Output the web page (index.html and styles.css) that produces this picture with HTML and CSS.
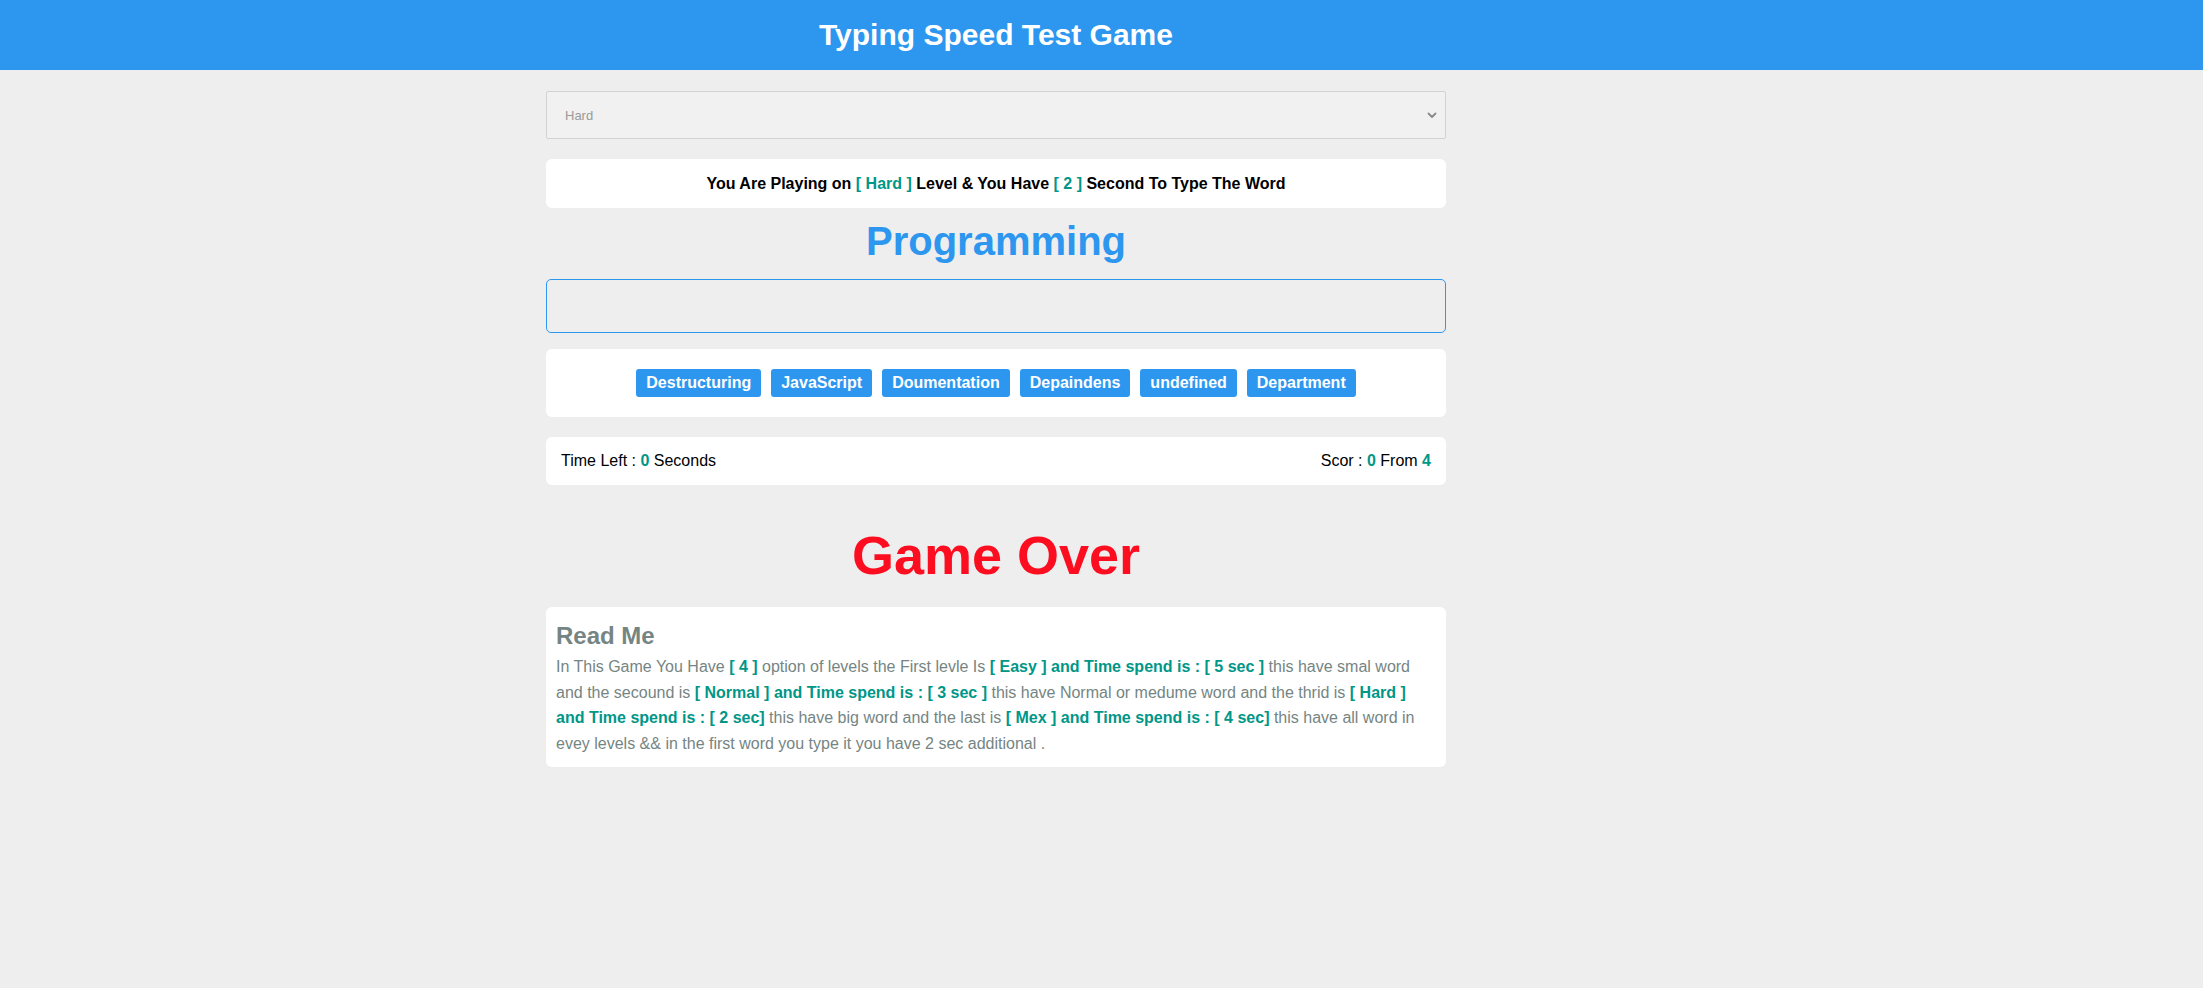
FILE: index.html
```html
<!DOCTYPE html>
<html lang="en">
<head>
<meta charset="utf-8">
<title>Typing Speed Test Game</title>
<link rel="stylesheet" href="styles.css">
</head>
<body>
<header class="top-bar">
  <div class="wrap">
    <h1 class="title">Typing Speed Test Game</h1>
  </div>
</header>
<main class="wrap game">
  <div class="select-box">
    <select class="level-select">
      <option>Hard</option>
    </select>
    <svg class="chev" width="10" height="8" viewBox="0 0 10 8"><path d="M1.5 2.5 L5 6 L8.5 2.5" fill="none" stroke="#8a8a8a" stroke-width="1.8" stroke-linecap="round" stroke-linejoin="round"/></svg>
  </div>
  <div class="card message">You Are Playing on <span class="hl">[ Hard ]</span> Level &amp; You Have <span class="hl">[ 2 ]</span> Second To Type The Word</div>
  <div class="the-word">Programming</div>
  <input class="input" type="text">
  <div class="card upcoming">
    <span class="chip">Destructuring</span>
    <span class="chip">JavaScript</span>
    <span class="chip">Doumentation</span>
    <span class="chip">Depaindens</span>
    <span class="chip">undefined</span>
    <span class="chip">Department</span>
  </div>
  <div class="card control">
    <div>Time Left : <span class="hl">0</span> Seconds</div>
    <div>Scor : <span class="hl">0</span> From <span class="hl">4</span></div>
  </div>
  <div class="finish">Game Over</div>
  <div class="card readme">
    <h2 class="readme-title">Read Me</h2>
    <p class="readme-text">In This Game You Have <b class="hl">[ 4 ]</b> option of levels the First levle Is <b class="hl">[ Easy ] and Time spend is : [ 5 sec ]</b> this have smal word and the secound is <b class="hl">[ Normal ] and Time spend is : [ 3 sec ]</b> this have Normal or medume word and the thrid is <b class="hl">[ Hard ] and Time spend is : [ 2 sec]</b> this have big word and the last is <b class="hl">[ Mex ] and Time spend is : [ 4 sec]</b> this have all word in evey levels &amp;&amp; in the first word you type it you have 2 sec additional .</p>
  </div>
</main>
</body>
</html>
```
FILE: styles.css
```css
* { box-sizing: border-box; }
html, body { margin: 0; padding: 0; }
body {
  background: #eeeeee;
  font-family: "Liberation Sans", Arial, sans-serif;
  color: #000;
  min-height: 988px;
}
.wrap {
  width: 900px;
  margin-left: 546px;
}
.top-bar {
  background: #2d97ef;
  height: 70px;
  display: flex;
  align-items: center;
}
.title {
  margin: 0;
  color: #fff;
  font-size: 30px;
  font-weight: bold;
  text-align: center;
  line-height: 36px;
}
.game {
  display: flex;
  flex-direction: column;
  padding-top: 21px;
}
.select-box { position: relative; }
.level-select {
  -webkit-appearance: none;
  appearance: none;
  width: 100%;
  height: 48px;
  border: 1px solid #d2d2d2;
  border-radius: 2px;
  background: #f1f1f1;
  color: #9a9a9a;
  font-family: "Liberation Sans", Arial, sans-serif;
  font-size: 13px;
  padding: 0 18px;
  outline: none;
}
.chev {
  position: absolute;
  right: 9px;
  top: 20px;
}
.card {
  background: #fff;
  border-radius: 6px;
}
.message {
  margin-top: 20px;
  height: 49px;
  display: flex;
  align-items: center;
  justify-content: center;
  font-weight: bold;
  font-size: 16px;
  white-space: pre;
}
.hl { color: #009688; font-weight: bold; }
.the-word {
  margin-top: 9px;
  text-align: center;
  color: #2d97ef;
  font-weight: bold;
  font-size: 40px;
  line-height: 49px;
}
.input {
  margin-top: 13px;
  height: 54px;
  width: 100%;
  border: 1px solid #2d97ef;
  border-radius: 5px;
  background: transparent;
  outline: none;
  font-size: 20px;
}
.upcoming {
  margin-top: 16px;
  height: 68px;
  display: flex;
  justify-content: center;
  align-items: center;
  gap: 10px;
}
.chip {
  background: #2d97ef;
  color: #fff;
  font-weight: bold;
  font-size: 16px;
  height: 28px;
  display: flex;
  align-items: center;
  padding: 0 10px;
  border-radius: 3px;
}
.control {
  margin-top: 20px;
  height: 48px;
  display: flex;
  justify-content: space-between;
  align-items: center;
  padding: 0 15px;
  font-size: 16px;
}
.finish {
  margin-top: 38px;
  text-align: center;
  color: #fc0d1f;
  font-weight: bold;
  font-size: 54px;
  line-height: 64px;
}
.readme {
  margin-top: 20px;
  padding: 15px 10px 11px;
}
.readme-title {
  margin: 0 0 4px;
  color: #758583;
  font-size: 24px;
  line-height: 28px;
}
.readme-text {
  margin: 0;
  color: #758583;
  font-size: 16px;
  line-height: 25.6px;
}
```
